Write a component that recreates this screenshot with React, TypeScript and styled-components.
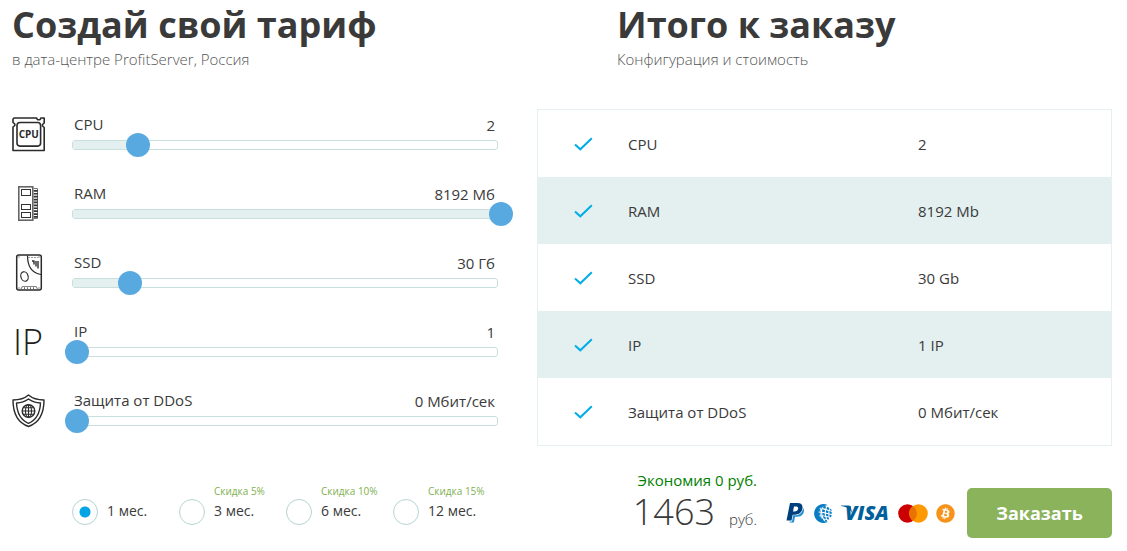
import React, { useState } from "react";
import styled, { createGlobalStyle } from "styled-components";
import { FaBitcoin } from "react-icons/fa";

const GlobalStyle = createGlobalStyle`
  * { box-sizing: border-box; }
  body {
    margin: 0;
    background: #fff;
    color: #3a3a3a;
    font-family: "Open Sans", "Noto Sans", sans-serif;
    font-size: 15px;
    line-height: 20px;
  }
`;

const Page = styled.main`
  display: grid;
  grid-template-columns: 486fr 575fr;
  column-gap: 39px;
  padding: 5px 15px 12px 12px;
`;

const Column = styled.section`
  display: flex;
  flex-direction: column;
  min-width: 0;
`;

const Header = styled.header<{ $indent?: boolean }>`
  padding-left: ${(p) => (p.$indent ? 80 : 0)}px;
  margin-bottom: 40px;
`;

const Title = styled.h2`
  margin: 0 0 4px;
  font-size: 36px;
  line-height: 40px;
  font-weight: 700;
  white-space: nowrap;
`;

const Subtitle = styled.p`
  margin: 0;
  font-weight: 300;
  color: #555;
`;

const Options = styled.div`
  display: flex;
  flex-direction: column;
  gap: 34px;
  padding-top: 6px;
`;

const OptionRow = styled.div`
  display: flex;
  height: 35px;
`;

const OptionIcon = styled.div`
  flex: 0 0 60px;
  display: flex;
  align-items: center;
  padding-top: 4px;

  svg { display: block; overflow: visible; }
`;

const IpMark = styled.span`
  padding-left: 1px;
  font-size: 36px;
  line-height: 36px;
  font-weight: 300;
  color: #231f20;
`;

const OptionBody = styled.div`
  flex: 1;
  min-width: 0;
`;

const OptionHead = styled.div`
  display: flex;
  justify-content: space-between;
  padding: 0 3px 0 2px;
  margin-bottom: 5px;

  label { line-height: 18px; }
`;

const Track = styled.div`
  position: relative;
  height: 10px;
  border: 1px solid #c8dfdd;
  border-radius: 3px;
`;

const Fill = styled.div`
  height: 100%;
  background: #e4f0f0;
`;

const Range = styled.input`
  position: absolute;
  top: -8px;
  left: -8px;
  width: calc(100% + 24px);
  height: 24px;
  margin: 0;
  appearance: none;
  background: none;
  cursor: pointer;

  &::-webkit-slider-thumb {
    appearance: none;
    width: 24px;
    height: 24px;
    border-radius: 50%;
    background: #58a9e0;
  }
  &::-moz-range-thumb {
    width: 24px;
    height: 24px;
    border: 0;
    border-radius: 50%;
    background: #58a9e0;
  }
`;

const Periods = styled.fieldset`
  display: flex;
  margin: 58px 0 0;
  padding: 0 0 0 60px;
  border: 0;
  min-width: 0;
`;

const Period = styled.label`
  flex: 0 0 107px;
  display: grid;
  grid-template-columns: 26px auto;
  grid-template-rows: 14px 26px;
  justify-content: start;
  column-gap: 9px;
  row-gap: 1px;
  white-space: nowrap;
  cursor: pointer;
`;

const Discount = styled.small`
  grid-area: 1 / 2;
  font-size: 10px;
  line-height: 14px;
  color: #80b04f;
`;

const PeriodName = styled.span`
  grid-area: 2 / 2;
  font-size: 14px;
  line-height: 24px;
`;

const Radio = styled.input`
  grid-area: 2 / 1;
  appearance: none;
  width: 26px;
  height: 26px;
  margin: 0;
  border: 1px solid #b5d5d2;
  border-radius: 50%;

  &:checked {
    background: radial-gradient(circle, #00a5e3 5px, transparent 6px);
  }
`;

const Summary = styled.table`
  width: 100%;
  border: 1px solid #e4f0f2;
  border-collapse: separate;
  border-spacing: 0;
  table-layout: fixed;

  tr:nth-child(even) { background: #e4f0f0; }
`;

const Cell = styled.td<{ $width?: number }>`
  width: ${(p) => (p.$width ? `${p.$width}px` : "auto")};
  height: 67px;
  padding: 0;
`;

const CheckCell = styled(Cell)`
  padding: 0 0 0 36px;

  svg { display: block; }
`;

const Footer = styled.div`
  display: flex;
  justify-content: flex-end;
  align-items: flex-start;
  margin-top: 26px;
`;

const Price = styled.div`
  margin-right: 29px;
  text-align: right;
  white-space: nowrap;
`;

const Saving = styled.div`
  line-height: 16px;
  color: #008000;
`;

const Total = styled.div`
  display: flex;
  justify-content: flex-end;
  align-items: baseline;
  gap: 14px;
  font-weight: 300;
  line-height: 48px;
`;

const Amount = styled.span`
  font-size: 36px;
`;

const Payments = styled.div`
  display: flex;
  align-items: center;
  height: 50px;
  margin: 16px 12px 0 0;
  gap: 8px;

  svg { display: block; flex: none; overflow: visible; }
`;

const OrderButton = styled.button`
  width: 145px;
  height: 50px;
  margin-top: 16px;
  padding: 0;
  border: 0;
  border-radius: 5px;
  background: #8ab35c;
  color: #fff;
  font: 700 18px/24px "Open Sans", "Noto Sans", sans-serif;
  cursor: pointer;
`;

const CpuIcon = () => (
  <svg width="34" height="35" viewBox="0 0 34 35" fill="none" stroke="#2b2b2b" strokeWidth="1.6" strokeLinejoin="round" aria-hidden="true">
    <path d="M2 1H24.500L25.500 2.700H28L29 1H32.200V6L30.500 7.500V9L32.200 10.500V33.500H1V10L2.800 8.500V7L1 5.500V2Z" />
    <rect x="5" y="5.500" width="23.600" height="23.600" rx="3" />
    <text x="16.800" y="21" textAnchor="middle" fill="#2b2b2b" stroke="none" fontSize="10" fontWeight="700" fontFamily="Open Sans, sans-serif">CPU</text>
  </svg>
);

const RamIcon = () => (
  <svg width="34" height="35" viewBox="0 0 34 35" fill="none" stroke="#333" aria-hidden="true">
    <rect x="6.800" y="0.800" width="14" height="33.400" stroke="#666" strokeWidth="1.600" />
    <rect x="9.500" y="3.500" width="9" height="6" />
    <rect x="9.500" y="18.500" width="9" height="5" />
    <rect x="9.500" y="26.500" width="9" height="5" />
    <path d="M21.500 2.500H25.500V32.500H21.500" stroke="#777" />
    <path d="M23.800 4V32" strokeWidth="4" strokeDasharray="1.700 1.200" />
  </svg>
);

const SsdIcon = () => (
  <svg width="34" height="37" viewBox="0 0 34 37" fill="none" stroke="#2b2b2b" strokeWidth="1.200" aria-hidden="true">
    <rect x="4.700" y="1" width="24.600" height="35" rx="2" strokeWidth="1.500" />
    <path d="M15.500 1.500C15.500 12 19 19 29 20.500" />
    <ellipse cx="12.500" cy="22.500" rx="3.600" ry="4.800" transform="rotate(-18 12.500 22.500)" />
    <path d="M20 7H22.500M22 7V10.500M24 7V12.500M26 7V14.500" strokeWidth="1.400" />
    <path d="M9 35L10.500 32.500H24L25.500 35" stroke="#888" />
    <path d="M12 34.200H23" strokeWidth="2" strokeDasharray="1 2" stroke="#666" />
    <path d="M16 3.500H26" stroke="#999" strokeDasharray="2 1" />
    <path d="M6.500 3H7.500M26.500 3H27.500M6.500 34H7.500M26.500 34H27.500" />
  </svg>
);

const ShieldIcon = () => (
  <svg width="34" height="34" viewBox="0 0 34 34" fill="none" stroke="#2b2b2b" strokeWidth="1.400" strokeLinejoin="round" aria-hidden="true">
    <path d="M16.500 1C12.500 4.500 7 6 1 6C1 18 5 28.500 16.500 32.500C28 28.500 32 18 32 6C26 6 20.500 4.500 16.500 1Z" />
    <path d="M16.500 5C13 7.500 9 8.800 4.500 9C5 18.500 8.500 26 16.500 29.300C24.500 26 28 18.500 28.500 9C24 8.800 20 7.500 16.500 5Z" />
    <circle cx="16.500" cy="17" r="6.300" />
    <ellipse cx="16.500" cy="17" rx="3" ry="6.300" strokeWidth="1.100" />
    <path d="M16.500 10.700V23.300M10.200 17H22.800M11.500 13.700H21.500M11.500 20.300H21.500" strokeWidth="1.100" />
  </svg>
);

const CheckIcon = () => (
  <svg width="19" height="14" viewBox="0 0 19 14" fill="none" stroke="#00ade6" strokeWidth="2" aria-label="включено">
    <path d="M1 7.500L6.300 12.300L17.800 1.200" />
  </svg>
);

const PaypalIcon = () => (
  <svg width="20" height="20" viewBox="0 0 20 20" aria-label="PayPal">
    <path d="M6.500 3.500H14C17.500 4 18.600 6.500 17.700 9.300C16.700 12.800 14 13.800 10.500 13.700H9L7.900 19.500H3.500Z" fill="#1f8fd0" />
    <path d="M4 0H11.500C15.500 0 17.200 2.300 16.300 6C15.400 10 12.600 11.700 8.700 11.700H6.700L5.500 18H0.500Z" fill="#fff" stroke="#fff" strokeWidth="1.200" />
    <path fillRule="evenodd" d="M4 0H11.500C15.500 0 17.200 2.300 16.300 6C15.400 10 12.600 11.700 8.700 11.700H6.700L5.500 17.500H0.500ZM8 3.500L7 8.500H8.500C10.500 8.500 11.800 7.700 12.100 5.800C12.400 4.200 11.500 3.500 9.800 3.500Z" fill="#003f7d" />
  </svg>
);

const WebmoneyIcon = () => (
  <svg width="19" height="19" viewBox="0 0 19 19" aria-label="WebMoney">
    <path d="M13.500 1A9.400 9.400 0 1 0 13.500 18L10 17L7.500 13L6.800 6L9 2.500Z" fill="#0a7cc4" />
    <g fill="#0a7cc4">
      <path d="M9.500 1.800L12 2.500L11.500 4.800L9 4.200ZM13 2.800L15.300 4L14.800 6L12.500 5.200ZM8.300 5.200L11 6L10.700 8.300L8 7.700ZM12 6.300L14.500 7L14.300 9.200L11.800 8.600ZM15.500 7L17.800 8L17.500 10L15.400 9.500ZM8.200 8.800L10.800 9.400L11 11.800L8.500 11.200ZM12 9.800L14.400 10.300L14.500 12.400L12.200 12ZM15.500 10.600L17.700 11L17 13.200L15.600 12.900ZM8.800 12.300L11.300 12.800L12 15L9.700 14.600ZM12.500 13L14.700 13.400L15 15.400L13.200 15.200ZM10.500 15.600L12.600 16L13.500 17.700L11.500 17.500ZM15.800 4.500L17.400 5.500L17.600 7L15.900 6.200Z" />
    </g>
    <path d="M5.500 4.500L7.500 5M4.500 8L7.500 8.500M5 11.700L8 12.200M7 3.500L6 8L7.500 14.500" fill="none" stroke="#fff" strokeWidth="0.700" />
  </svg>
);

const VisaIcon = () => (
  <svg width="49" height="18" viewBox="0 0 49 18" aria-label="Visa">
    <path d="M0 1.500H7.500C9.300 1.500 9.800 2.300 10 3.500L11 9C9 4.800 5 2.800 0 2.100Z" fill="#00609c" />
    <text x="4" y="16" fill="#00609c" fontFamily="Open Sans, sans-serif" fontSize="20" fontWeight="800" fontStyle="italic">VISA</text>
  </svg>
);

const MastercardIcon = () => (
  <svg width="30" height="19" viewBox="0 0 30 19" aria-label="Mastercard">
    <circle cx="9.500" cy="9.500" r="9.300" fill="#c00" />
    <circle cx="20.500" cy="9.500" r="9.300" fill="#f90" />
    <path d="M15 2A9.300 9.300 0 0 1 15 17A9.300 9.300 0 0 1 15 2Z" fill="#e87300" />
  </svg>
);

interface Resource {
  id: string;
  label: string;
  icon: React.ReactNode;
  min: number;
  max: number;
  step: number;
  initial: number;
  unit: string;
  summaryUnit: string;
}

const resources: Resource[] = [
  { id: "cpu", label: "CPU", icon: <CpuIcon />, min: 1, max: 8, step: 1, initial: 2, unit: "", summaryUnit: "" },
  { id: "ram", label: "RAM", icon: <RamIcon />, min: 512, max: 8192, step: 512, initial: 8192, unit: " Мб", summaryUnit: " Mb" },
  { id: "ssd", label: "SSD", icon: <SsdIcon />, min: 20, max: 100, step: 5, initial: 30, unit: " Гб", summaryUnit: " Gb" },
  { id: "ip", label: "IP", icon: <IpMark aria-hidden="true">IP</IpMark>, min: 1, max: 16, step: 1, initial: 1, unit: "", summaryUnit: " IP" },
  { id: "ddos", label: "Защита от DDoS", icon: <ShieldIcon />, min: 0, max: 100, step: 10, initial: 0, unit: " Мбит/сек", summaryUnit: " Мбит/сек" },
];

const periods = [
  { months: 1, discount: "" },
  { months: 3, discount: "Скидка 5%" },
  { months: 6, discount: "Скидка 10%" },
  { months: 12, discount: "Скидка 15%" },
];

export default function App() {
  const [values, setValues] = useState<number[]>(resources.map((r) => r.initial));
  const [months, setMonths] = useState(1);

  const change = (index: number, value: number) =>
    setValues((prev) => prev.map((v, i) => (i === index ? value : v)));

  return (
    <>
      <GlobalStyle />
      <Page>
        <Column>
          <Header>
            <Title>Создай свой тариф</Title>
            <Subtitle>в дата-центре ProfitServer, Россия</Subtitle>
          </Header>
          <Options>
            {resources.map((r, i) => (
              <OptionRow key={r.id}>
                <OptionIcon>{r.icon}</OptionIcon>
                <OptionBody>
                  <OptionHead>
                    <label htmlFor={r.id}>{r.label}</label>
                    <output htmlFor={r.id}>{values[i]}{r.unit}</output>
                  </OptionHead>
                  <Track>
                    <Fill style={{ width: `${((values[i] - r.min) / (r.max - r.min)) * 100}%` }} />
                    <Range
                      id={r.id}
                      type="range"
                      min={r.min}
                      max={r.max}
                      step={r.step}
                      value={values[i]}
                      onChange={(e) => change(i, Number(e.target.value))}
                    />
                  </Track>
                </OptionBody>
              </OptionRow>
            ))}
          </Options>
          <Periods>
            {periods.map((p) => (
              <Period key={p.months}>
                <Radio type="radio" name="period" checked={months === p.months} onChange={() => setMonths(p.months)} />
                {p.discount && <Discount>{p.discount}</Discount>}
                <PeriodName>{p.months} мес.</PeriodName>
              </Period>
            ))}
          </Periods>
        </Column>

        <Column>
          <Header $indent>
            <Title>Итого к заказу</Title>
            <Subtitle>Конфигурация и стоимость</Subtitle>
          </Header>
          <Summary>
            <tbody>
              {resources.map((r, i) => (
                <tr key={r.id}>
                  <CheckCell $width={90}><CheckIcon /></CheckCell>
                  <Cell $width={290}>{r.label}</Cell>
                  <Cell>{values[i]}{r.summaryUnit}</Cell>
                </tr>
              ))}
            </tbody>
          </Summary>
          <Footer>
            <Price>
              <Saving>Экономия 0 руб.</Saving>
              <Total>
                <Amount>1463</Amount>
                <span>руб.</span>
              </Total>
            </Price>
            <Payments>
              <PaypalIcon />
              <WebmoneyIcon />
              <VisaIcon />
              <MastercardIcon />
              <FaBitcoin size={19} color="#f7931a" />
            </Payments>
            <OrderButton type="button">Заказать</OrderButton>
          </Footer>
        </Column>
      </Page>
    </>
  );
}
